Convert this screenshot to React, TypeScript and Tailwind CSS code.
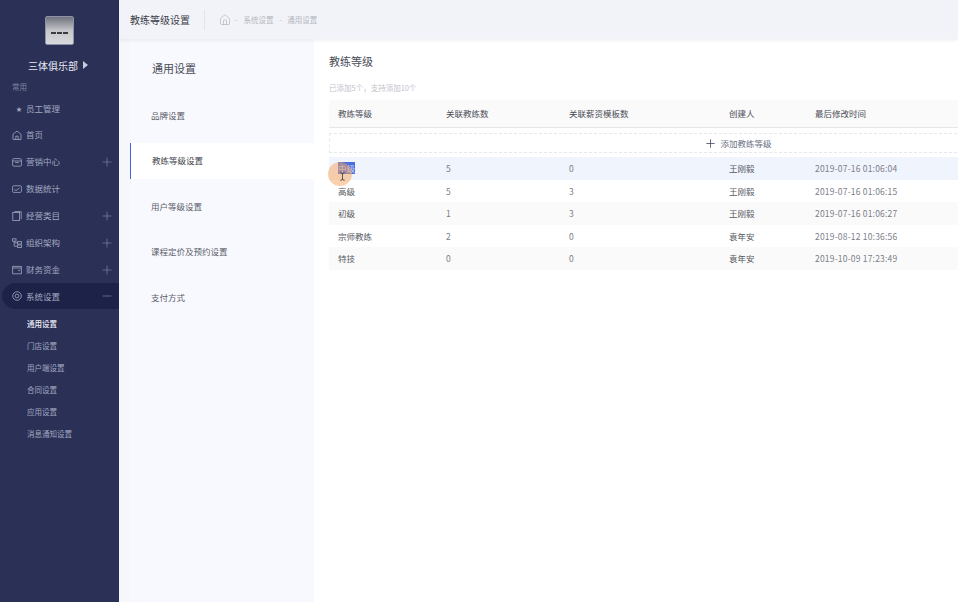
import React from "react";
import { Plus, Minus, Home, TextCursor } from "lucide-react";

const font = "font-['Noto_Sans_CJK_SC','Noto_Sans',sans-serif]";

function MenuIcon({ name }: { name: string }) {
  const cls = "w-[10px] h-[10px] text-[#a3a8c0]";
  if (name === "home")
    return (
      <svg viewBox="0 0 10 10" fill="none" stroke="currentColor" strokeWidth="0.8" className={cls}>
        <path d="M1 4.2 5 1l4 3.2V9.5H1z" />
        <path d="M3.8 9.5V6.2h2.4v3.3" />
      </svg>
    );
  if (name === "bag")
    return (
      <svg viewBox="0 0 10 10" fill="none" stroke="currentColor" strokeWidth="0.8" className={cls}>
        <rect x="0.6" y="1.6" width="8.8" height="7.6" rx="1.2" />
        <path d="M0.6 4h8.8M3.2 5.6h3.6" />
      </svg>
    );
  if (name === "chart")
    return (
      <svg viewBox="0 0 10 10" fill="none" stroke="currentColor" strokeWidth="0.8" className={cls}>
        <rect x="0.6" y="1.8" width="8.8" height="6.6" rx="1" />
        <path d="M2.4 5.4 4 6.6l3.4-2.6" />
      </svg>
    );
  if (name === "book")
    return (
      <svg viewBox="0 0 10 10" fill="none" stroke="currentColor" strokeWidth="0.8" className={cls}>
        <rect x="0.8" y="1.4" width="6.8" height="8" />
        <path d="M2.4 0.6h6.8v7.6" />
      </svg>
    );
  if (name === "org")
    return (
      <svg viewBox="0 0 10 10" fill="none" stroke="currentColor" strokeWidth="0.8" className={cls}>
        <rect x="0.6" y="0.8" width="3.4" height="2.4" />
        <rect x="5.6" y="3.6" width="3.8" height="2.4" />
        <rect x="5.6" y="7" width="3.8" height="2.4" />
        <path d="M2.2 3.2v5h3.4M2.2 4.8h3.4" />
      </svg>
    );
  if (name === "wallet")
    return (
      <svg viewBox="0 0 10 10" fill="none" stroke="currentColor" strokeWidth="0.8" className={cls}>
        <path d="M0.6 1.4h8.8v7.4H0.6zM0.6 3h8.8" />
        <rect x="6.4" y="4.8" width="1.4" height="1.2" fill="currentColor" stroke="none" />
      </svg>
    );
  return (
    <svg viewBox="0 0 10 10" fill="none" stroke="currentColor" strokeWidth="0.8" className={cls}>
      <circle cx="5" cy="5" r="4.3" />
      <circle cx="5" cy="5" r="1.9" />
    </svg>
  );
}

const menu = [
  { icon: "home", label: "首页" },
  { icon: "bag", label: "营销中心", plus: true },
  { icon: "chart", label: "数据统计" },
  { icon: "book", label: "经营类目", plus: true },
  { icon: "org", label: "组织架构", plus: true },
  { icon: "wallet", label: "财务资金", plus: true },
];

const subMenu = ["通用设置", "门店设置", "用户端设置", "合同设置", "应用设置", "消息通知设置"];

const sideNav = ["品牌设置", "教练等级设置", "用户等级设置", "课程定价及预约设置", "支付方式"];

const rows = [
  ["中级", "5", "0", "王刚毅", "2019-07-16 01:06:04"],
  ["高级", "5", "3", "王刚毅", "2019-07-16 01:06:15"],
  ["初级", "1", "3", "王刚毅", "2019-07-16 01:06:27"],
  ["宗师教练", "2", "0", "袁年安", "2019-08-12 10:36:56"],
  ["特技", "0", "0", "袁年安", "2019-10-09 17:23:49"],
];

function Sidebar() {
  return (
    <aside className="w-[119px] shrink-0 bg-[#2a3056] flex flex-col">
      <div className="mt-4 mx-auto w-[29px] h-[29px] rounded-[2px] bg-gradient-to-b from-[#70737c] via-[#c4c6ca] to-[#d9dadd] border border-[#8d92a8] flex items-center justify-center">
        <div className="flex gap-[1px] mt-[4px]">
          <span className="w-[5px] h-[2px] bg-[#3a3a40]" />
          <span className="w-[5px] h-[2px] bg-[#3a3a40]" />
          <span className="w-[5px] h-[2px] bg-[#3a3a40]" />
        </div>
      </div>
      <div className="mt-[12px] h-[16px] flex items-center pl-[28px] text-[10px] text-[#e8eaf2]">
        三体俱乐部
        <span className="ml-[5px] w-0 h-0 border-y-[4px] border-y-transparent border-l-[5px] border-l-[#c8cbd9]" />
      </div>
      <div className="mt-[8px] pl-[12px] text-[7.5px] leading-[12px] text-[#7f85a3]">常用</div>
      <div className="mt-[8px] h-[14px] flex items-center pl-[16px] text-[8.5px] text-[#a3a8c0]">
        <span className="text-[6px] mr-[4px]">★</span>
        员工管理
      </div>
      <div className="mt-[6px] flex flex-col">
        {menu.map((m) => (
          <div key={m.label} className="h-[27px] flex items-center pl-[12px] pr-[5px] text-[8.5px] text-[#a3a8c0]">
            <MenuIcon name={m.icon} />
            <span className="ml-[4px] flex-1">{m.label}</span>
            {m.plus && <Plus size={14} strokeWidth={1.2} className="text-[#7f849f]" />}
          </div>
        ))}
        <div className="ml-[2px] h-[26px] flex items-center pl-[10px] pr-[5px] rounded-l-full bg-[#1d2248] text-[8.5px] text-[#a3a8c0]">
          <MenuIcon name="gear" />
          <span className="ml-[4px] flex-1">系统设置</span>
          <Minus size={14} strokeWidth={1.2} className="text-[#7f849f]" />
        </div>
      </div>
      <div className="flex flex-col mt-[4px]">
        {subMenu.map((s, i) => (
          <div
            key={s}
            className={`h-[22px] flex items-center pl-[27px] text-[7.5px] ${i === 0 ? "text-[#f0f1f6] font-medium" : "text-[#a3a8c0]"}`}
          >
            {s}
          </div>
        ))}
      </div>
    </aside>
  );
}

function Header() {
  return (
    <header className="relative z-10 h-[39px] shrink-0 bg-[#f2f3f8] shadow-[0_1px_4px_rgba(0,0,0,0.08)] flex items-center pl-[11px]">
      <span className="text-[10px] text-[#3c3f4a]">教练等级设置</span>
      <span className="ml-[14px] w-px h-[20px] bg-[#e2e4ea]" />
      <Home size={12} strokeWidth={1.2} className="ml-[14px] text-[#a9adb8]" />
      <span className="ml-[4px] text-[7.5px] text-[#b4b7c2]">-</span>
      <span className="ml-[6px] text-[7.5px] text-[#b4b7c2]">系统设置</span>
      <span className="ml-[6px] text-[7.5px] text-[#b4b7c2]">-</span>
      <span className="ml-[5px] text-[7.5px] text-[#b4b7c2]">通用设置</span>
    </header>
  );
}

function SideNav() {
  return (
    <nav className="ml-[11px] w-[184px] shrink-0 bg-[#f8f9fe] flex flex-col">
      <div className="mt-[21px] pl-[22px] text-[11px] leading-[16px] text-[#4a4d58]">通用设置</div>
      <div className="mt-[21px] flex flex-col gap-[9.5px]">
        {sideNav.map((s, i) => (
          <div
            key={s}
            className={`h-[36px] flex items-center pl-[21px] text-[8.5px] ${
              i === 1 ? "bg-white border-l border-l-[#3f66e0] text-[#3c3f4a]" : "text-[#5a5d68]"
            }`}
          >
            {s}
          </div>
        ))}
      </div>
    </nav>
  );
}

function Cell({ className, children }: { className: string; children: React.ReactNode }) {
  return <div className={`shrink-0 ${className}`}>{children}</div>;
}

function LevelTable() {
  return (
    <div className="mt-[6px] text-[8.5px]">
      <div className="h-[28px] bg-[#fafafa] border-b border-b-[#e6e6e6] flex items-center pl-[9px] text-[#4a4d58]">
        <Cell className="w-[108px]">教练等级</Cell>
        <Cell className="w-[123px]">关联教练数</Cell>
        <Cell className="w-[160px]">关联薪资模板数</Cell>
        <Cell className="w-[86px]">创建人</Cell>
        <Cell className="w-[100px]">最后修改时间</Cell>
      </div>
      <div className="mt-[5px] h-[20px] border border-dashed border-[#e6e8ef] flex items-center justify-center gap-[3px] text-[#6a7085]">
        <Plus size={13} strokeWidth={1.6} className="text-[#4f5670]" />
        添加教练等级
      </div>
      <div className="mt-[4px] flex flex-col">
        {rows.map((r, i) => (
          <div
            key={r[4]}
            className={`h-[22.6px] flex items-center pl-[9px] text-[#7b7e88] ${
              i === 0 ? "bg-[#f0f4fd]" : i % 2 === 0 ? "bg-[#fafafa]" : "bg-white"
            }`}
          >
            <Cell className="w-[108px] text-[#55585f]">
              {i === 0 ? <span className="bg-[#4a6ee0] text-[#c9d4f5]">{r[0]}</span> : r[0]}
            </Cell>
            <Cell className="w-[123px]">{r[1]}</Cell>
            <Cell className="w-[160px]">{r[2]}</Cell>
            <Cell className="w-[86px] text-[#55585f]">{r[3]}</Cell>
            <Cell className="w-[120px] tracking-[0.2px]">{r[4]}</Cell>
          </div>
        ))}
      </div>
    </div>
  );
}

export default function App() {
  return (
    <div className={`${font} relative w-[958px] h-[602px] overflow-hidden flex bg-white`}>
      <Sidebar />
      <div className="flex-1 min-w-0 flex flex-col bg-[#f6f7fb]">
        <Header />
        <div className="flex-1 flex min-h-0">
          <SideNav />
          <main className="flex-1 min-w-0 bg-white pl-[15px] overflow-hidden">
            <div className="w-[818px]">
              <h2 className="mt-[14px] text-[11px] leading-[16px] text-[#4a4d58]">教练等级</h2>
              <p className="mt-[13px] text-[7.5px] leading-[12px] text-[#c0c3cc]">已添加5个，支持添加10个</p>
              <LevelTable />
            </div>
          </main>
        </div>
      </div>
      {/* cursor highlight */}
      <div className="absolute left-[328px] top-[162px] w-[24px] h-[24px] rounded-full bg-[#f7a35c]/50" />
      <TextCursor size={9} strokeWidth={2} className="absolute left-[338px] top-[172px] text-[#33353c]" />
    </div>
  );
}
